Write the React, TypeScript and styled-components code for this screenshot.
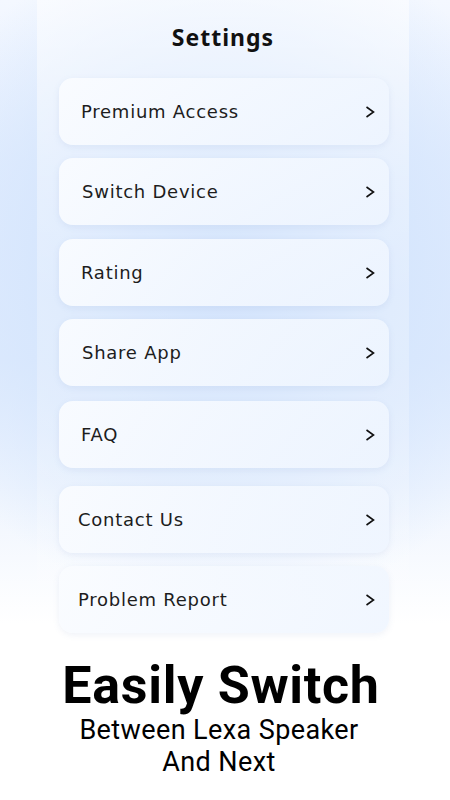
import React from 'react';
import styled, { createGlobalStyle } from 'styled-components';

const GlobalStyle = createGlobalStyle`
  html, body {
    margin: 0;
    padding: 0;
  }
  body {
    width: 450px;
    height: 800px;
    overflow: hidden;
    font-family: "DejaVu Sans", "Noto Sans", sans-serif;
    background:
      radial-gradient(ellipse 340px 340px at 50% 270px, #c3dafb 0%, #d6e6fd 50%, rgba(255, 255, 255, 0) 100%),
      linear-gradient(180deg, #f4f8ff 0%, #e4eefe 20%, #dfebfd 45%, #ffffff 78%);
  }
`;

const Page = styled.div`
  width: 450px;
  height: 800px;
  display: flex;
  flex-direction: column;
`;

const Panel = styled.div`
  width: 372px;
  margin-left: 37px;
  padding-top: 22px;
  padding-bottom: 18px;
  background: linear-gradient(
    180deg,
    rgba(255, 255, 255, 0.55) 0%,
    rgba(255, 255, 255, 0.25) 45%,
    rgba(255, 255, 255, 0.2) 80%,
    rgba(255, 255, 255, 0) 100%
  );
  display: flex;
  flex-direction: column;
`;

const Title = styled.h1`
  margin: 0 0 26px;
  text-align: center;
  font-family: "Noto Sans", sans-serif;
  font-weight: 700;
  font-size: 23px;
  letter-spacing: 1px;
  line-height: 30px;
  color: #111;
`;

const List = styled.div`
  display: flex;
  flex-direction: column;
  padding-left: 22px;
`;

const Card = styled.div<{ $gap: number; $indent: number }>`
  width: 330px;
  height: 67px;
  margin-top: ${({ $gap }) => $gap}px;
  box-sizing: border-box;
  padding: 0 14px 0 ${({ $indent }) => $indent}px;
  display: flex;
  align-items: center;
  justify-content: space-between;
  border-radius: 14px;
  background: linear-gradient(135deg, rgba(250, 252, 255, 0.92), rgba(238, 245, 255, 0.85));
  box-shadow: 0 2px 6px rgba(120, 150, 200, 0.12);
`;

const Label = styled.span`
  font-size: 18px;
  color: #1d1d1d;
  letter-spacing: 0.75px;
`;

const Chevron = styled.svg`
  width: 10px;
  height: 12px;
  flex-shrink: 0;
`;

const Tagline = styled.div`
  margin-top: auto;
  padding-bottom: 22px;
  text-align: center;
  font-family: Roboto, "Noto Sans", sans-serif;
  color: #000;
`;

const Headline = styled.div`
  font-size: 52px;
  font-weight: 700;
  line-height: 56px;
  letter-spacing: 0.7px;
  padding-right: 8px;
`;

const Sub = styled.div`
  font-size: 27px;
  line-height: 32px;
  letter-spacing: 0.4px;
  padding-right: 12px;
`;

const items = [
  { label: 'Premium Access', gap: 0, indent: 22 },
  { label: 'Switch Device', gap: 13, indent: 23 },
  { label: 'Rating', gap: 14, indent: 22 },
  { label: 'Share App', gap: 13, indent: 23 },
  { label: 'FAQ', gap: 15, indent: 22 },
  { label: 'Contact Us', gap: 18, indent: 19 },
  { label: 'Problem Report', gap: 13, indent: 19 },
];

const ChevronIcon = () => (
  <Chevron viewBox="0 0 10 12">
    <polyline points="1.5,1 8.5,6 1.5,11" fill="none" stroke="#111" strokeWidth="1.6" strokeLinejoin="miter" />
  </Chevron>
);

export default function App() {
  return (
    <Page>
      <GlobalStyle />
      <Panel>
        <Title>Settings</Title>
        <List>
          {items.map((item) => (
            <Card key={item.label} $gap={item.gap} $indent={item.indent}>
              <Label>{item.label}</Label>
              <ChevronIcon />
            </Card>
          ))}
        </List>
      </Panel>
      <Tagline>
        <Headline>Easily Switch</Headline>
        <Sub>Between Lexa Speaker</Sub>
        <Sub>And Next</Sub>
      </Tagline>
    </Page>
  );
}
